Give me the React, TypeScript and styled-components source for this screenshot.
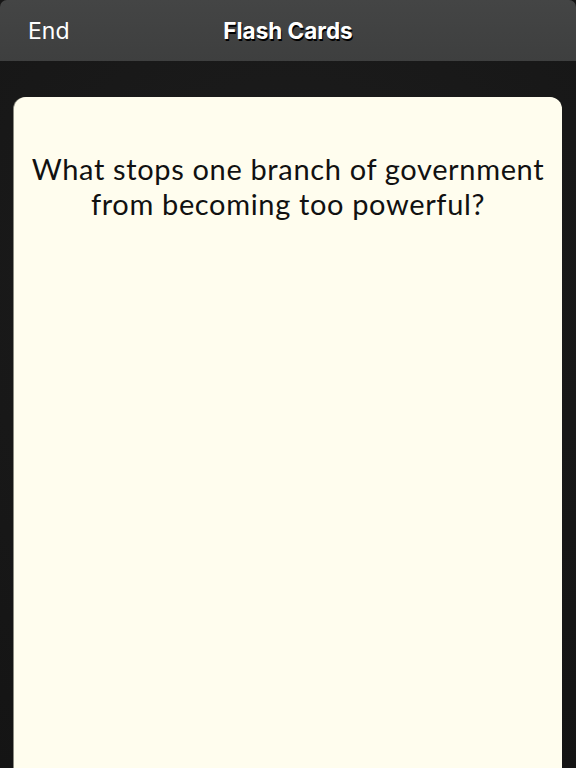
import * as React from "react";
import styled, { createGlobalStyle } from "styled-components";

const GlobalStyle = createGlobalStyle`
  html, body {
    margin: 0;
    padding: 0;
    background: #1b1b1b;
  }
`;

const Screen = styled.div`
  width: 576px;
  height: 768px;
  overflow: hidden;
  display: flex;
  flex-direction: column;
  background: #161616;
`;

const NavBar = styled.header`
  height: 61px;
  flex-shrink: 0;
  display: grid;
  grid-template-columns: 1fr auto 1fr;
  align-items: center;
  padding: 0 28px;
  border-radius: 7px 7px 0 0;
  background: linear-gradient(#444545, #3e3f3f);
  font-family: Inter, "Liberation Sans", sans-serif;
`;

const NavButton = styled.button`
  justify-self: start;
  background: none;
  border: none;
  padding: 0;
  color: #ffffff;
  font-family: inherit;
  font-size: 23px;
  cursor: pointer;
`;

const Title = styled.h1`
  margin: 0;
  color: #ffffff;
  font-size: 22.5px;
  font-weight: 700;
  text-shadow: 1px 2px 0 #000;
`;

const Table = styled.main`
  flex: 1;
  display: flex;
  padding: 36px 14px 0 14px;
  background: radial-gradient(circle at 50% 30%, #1d1d1d, #141414);
`;

const Card = styled.section`
  flex: 1;
  background: #fffdee;
  border-radius: 12px 12px 0 0;
  padding: 54px 0 0;
  box-shadow: -1px 0 0 #8a8a80;
`;

const Question = styled.p`
  margin: 0;
  text-align: center;
  color: #111;
  font-family: Lato, "DejaVu Sans", sans-serif;
  font-size: 29px;
  line-height: 35px;
  letter-spacing: 0.65px;
  white-space: nowrap;
`;

const App: React.FC = () => {
  return (
    <Screen>
      <GlobalStyle />
      <NavBar>
        <NavButton>End</NavButton>
        <Title>Flash Cards</Title>
        <span />
      </NavBar>
      <Table>
        <Card>
          <Question>
            What stops one branch of government
            <br />
            from becoming too powerful?
          </Question>
        </Card>
      </Table>
    </Screen>
  );
};

export default App;
